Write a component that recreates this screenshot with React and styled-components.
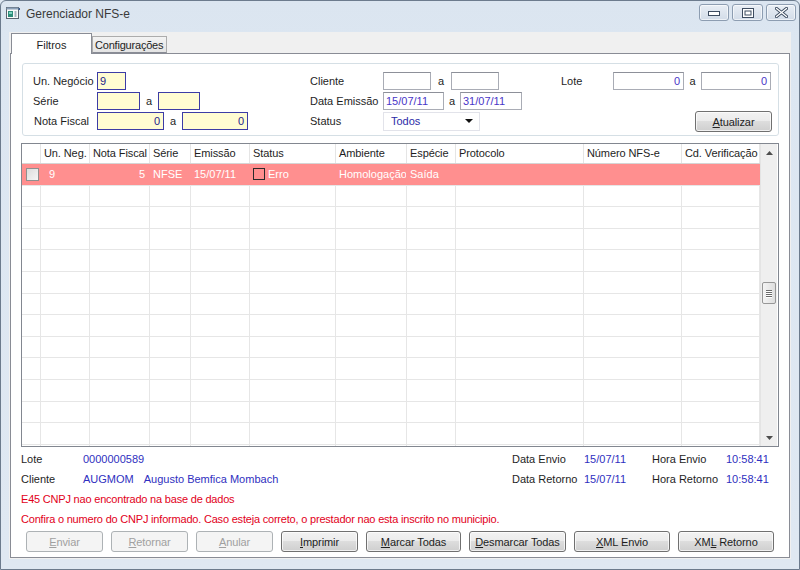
import React from 'react';
import styled, { createGlobalStyle } from 'styled-components';

const GlobalStyle = createGlobalStyle`
  html, body {
    margin: 0;
    padding: 0;
    background: #dfe8f2;
  }
  body {
    font-family: "Liberation Sans", Arial, sans-serif;
    font-size: 11px;
    color: #1e1e1e;
  }
`;

const Window = styled.div`
  width: 800px;
  height: 570px;
  box-sizing: border-box;
  border: 1px solid #6c7b8d;
  border-radius: 6px 6px 0 0;
  background: linear-gradient(#dbe5f0, #dce6f1 40px, #dfe8f2);
  display: flex;
  flex-direction: column;
  overflow: hidden;
`;

const TitleBar = styled.div`
  height: 31px;
  flex: none;
  display: flex;
  align-items: flex-start;
  padding: 0 3px 0 5px;
  box-sizing: border-box;
`;

const TitleIcon = styled.svg`
  margin-top: 6px;
  flex: none;
`;

const Title = styled.div`
  margin: 5px 0 0 6px;
  font-size: 12px;
  color: #3a3a3a;
  flex: 1;
  line-height: 16px;
`;

const CaptionButtons = styled.div`
  display: flex;
  gap: 3px;
  margin-top: 3px;
`;

const CaptionButton = styled.div`
  width: ${p => p.$w}px;
  height: 17px;
  box-sizing: border-box;
  border: 1px solid #8d9db1;
  border-radius: 3px;
  background: linear-gradient(#e9eef5, #d2dce8);
  box-shadow: inset 0 0 0 1px rgba(255, 255, 255, 0.6);
  display: flex;
  align-items: center;
  justify-content: center;
`;

const Client = styled.div`
  flex: 1;
  margin: 0 8px 10px 8px;
  background: #f0f0f0;
  padding: 1px;
  display: flex;
  flex-direction: column;
`;

const TabStrip = styled.div`
  height: 20px;
  display: flex;
  align-items: flex-end;
  padding-left: 1px;
  position: relative;
  z-index: 1;
`;

const Tab = styled.div`
  box-sizing: border-box;
  height: ${p => (p.$active ? 21 : 17)}px;
  width: ${p => p.$w}px;
  margin-bottom: ${p => (p.$active ? -1 : 0)}px;
  border: 1px solid ${p => (p.$active ? '#898c95' : '#acacac')};
  border-bottom: ${p => (p.$active ? 'none' : '1px solid #898c95')};
  background: ${p => (p.$active ? '#ffffff' : 'linear-gradient(#f3f3f3, #e4e4e4)')};
  display: flex;
  align-items: center;
  justify-content: ${p => (p.$active ? 'center' : 'flex-start')};
  padding: ${p => (p.$active ? '2px 0 0 0' : '0 0 0 2px')};
  font-size: 11px;
  letter-spacing: ${p => (p.$active ? 0 : -0.2)}px;
  white-space: nowrap;
  color: #1e1e1e;
`;

const Panel = styled.div`
  flex: 1;
  border: 1px solid #898c95;
  background: #ffffff;
  padding: 8px 10px 0 10px;
  display: flex;
  flex-direction: column;
`;

const GroupBox = styled.div`
  margin: 1px 0 0 1px;
  border: 1px solid #d5dfe5;
  border-radius: 3px;
  padding: 8px 0 5px 10px;
  display: flex;
  height: 58px;
`;

const Section = styled.div`
  width: ${p => (p.$w ? `${p.$w}px` : 'auto')};
  flex: ${p => (p.$w ? 'none' : 1)};
  display: flex;
  flex-direction: column;
  gap: 2px;
`;

const FieldRow = styled.div`
  height: 18px;
  display: flex;
  align-items: center;
`;

const Label = styled.div`
  width: ${p => p.$w}px;
  flex: none;
  padding-left: ${p => p.$pad || 0}px;
  box-sizing: border-box;
  color: #1e1e1e;
`;

const Input = styled.div`
  width: ${p => p.$w}px;
  height: 18px;
  flex: none;
  box-sizing: border-box;
  border: 1px solid ${p => (p.$req ? '#3c3ca6' : '#a9acb5')};
  border-top-color: ${p => (p.$req ? '#3c3ca6' : '#8d9099')};
  background: ${p => (p.$req ? '#fffcd2' : '#ffffff')};
  color: ${p => (p.$req ? '#23238c' : '#4a36c8')};
  text-align: ${p => (p.$right ? 'right' : 'left')};
  padding: 0 3px 0 2px;
  line-height: 16px;
  font-size: 11px;
`;

const Sep = styled.div`
  width: ${p => p.$w}px;
  flex: none;
  text-align: center;
`;

const Select = styled.div`
  width: 97px;
  height: 19px;
  box-sizing: border-box;
  border: 1px solid #e2e3ea;
  background: #fff;
  color: #2b2ba8;
  display: flex;
  align-items: center;
  padding: 0 6px 0 7px;
  justify-content: space-between;
`;

const Button = styled.div`
  width: ${p => p.$w}px;
  height: 21px;
  flex: none;
  box-sizing: border-box;
  border: 1px solid ${p => (p.$disabled ? '#adb2b5' : '#707070')};
  border-radius: 3px;
  background: ${p =>
    p.$disabled ? '#f4f4f4' : 'linear-gradient(#f2f2f2 0%, #ebebeb 49%, #dddddd 50%, #cfcfcf 100%)'};
  box-shadow: ${p => (p.$disabled ? 'none' : 'inset 0 0 0 1px rgba(255,255,255,0.7)')};
  color: ${p => (p.$disabled ? '#a0a0a0' : '#1e1e1e')};
  display: flex;
  align-items: center;
  justify-content: center;
  font-size: 11px;
  letter-spacing: -0.1px;
`;

const Grid = styled.div`
  margin-top: 7px;
  height: 304px;
  box-sizing: border-box;
  border: 1px solid #828790;
  display: flex;
  overflow: hidden;
`;

const Table = styled.div`
  width: 738px;
  flex: none;
  overflow: hidden;
`;

const cols = [19, 49, 60, 41, 59, 86, 71, 49, 128, 98, 78];
const colTemplate = cols.map(c => `${c}px`).join(' ');

const HeaderRow = styled.div`
  display: grid;
  grid-template-columns: ${colTemplate};
  height: 20px;
  box-sizing: border-box;
  border-bottom: 1px solid #d5d5d5;
  background: #ffffff;
`;

const HeaderCell = styled.div`
  padding-left: 3px;
  border-right: 1px solid #e5e5e5;
  line-height: 19px;
  white-space: nowrap;
  overflow: hidden;
  color: #1e1e1e;
  font-size: 11px;
  letter-spacing: -0.1px;
`;

const Row = styled.div`
  display: grid;
  grid-template-columns: ${colTemplate};
  height: 21.6px;
  box-sizing: border-box;
  border-bottom: 1px solid #e6e6e6;
  background: ${p => (p.$error ? '#ff8f8f' : '#ffffff')};
  color: #ffffff;
`;

const Cell = styled.div`
  border-right: 1px solid ${p => (p.$error ? 'transparent' : '#e6e6e6')};
  padding: 0 ${p => (p.$right ? 4 : 0)}px 0 ${p => (p.$pad != null ? p.$pad : 3)}px;
  display: flex;
  align-items: center;
  justify-content: ${p => (p.$right ? 'flex-end' : 'flex-start')};
  white-space: nowrap;
  overflow: hidden;
  font-size: 11px;
`;

const RowCheck = styled.div`
  width: 13px;
  height: 13px;
  box-sizing: border-box;
  border: 1px solid #8f8f8f;
  background: linear-gradient(135deg, #dcdcdc, #f6f6f6);
  margin-left: 1px;
`;

const StatusBox = styled.div`
  width: 12px;
  height: 12px;
  box-sizing: border-box;
  border: 1px solid #2a2a2a;
  margin-right: 3px;
`;

const ScrollBar = styled.div`
  width: 17px;
  flex: none;
  background: #efefef;
  border-left: 1px solid #e4e4e4;
  box-sizing: border-box;
  display: flex;
  flex-direction: column;
  align-items: center;
`;

const ArrowBox = styled.div`
  height: 17px;
  width: 100%;
  display: flex;
  align-items: center;
  justify-content: center;
`;

const Thumb = styled.div`
  margin-top: 121px;
  width: 14px;
  height: 22px;
  box-sizing: border-box;
  border: 1px solid #979797;
  border-radius: 2px;
  background: linear-gradient(90deg, #f4f4f4, #dedede);
  display: flex;
  flex-direction: column;
  align-items: center;
  justify-content: center;
  gap: 1px;
`;

const Grip = styled.div`
  width: 6px;
  height: 1px;
  background: #6a6a6a;
  box-shadow: 0 1px 0 #ffffff;
`;

const Spacer = styled.div`
  flex: 1;
`;

const InfoGrid = styled.div`
  display: grid;
  grid-template-columns: 62px 429px 72px 68px 74px auto;
  grid-auto-rows: 20px;
  align-items: center;
  margin-top: 2px;
`;

const InfoLabel = styled.div`
  color: #1e1e1e;
  white-space: nowrap;
`;

const InfoValue = styled.div`
  color: #2f2fc0;
  white-space: nowrap;
  span + span {
    margin-left: 10px;
  }
`;

const ErrorLine = styled.div`
  height: 20px;
  line-height: 20px;
  color: #e2001a;
  white-space: nowrap;
  letter-spacing: -0.2px;
`;

const ButtonBar = styled.div`
  display: flex;
  gap: 8px;
  padding-left: 5px;
  margin-top: 2px;
`;

const columns = [
  '',
  'Un. Neg.',
  'Nota Fiscal',
  'Série',
  'Emissão',
  'Status',
  'Ambiente',
  'Espécie',
  'Protocolo',
  'Número NFS-e',
  'Cd. Verificação',
];

function Mn({ text, at }) {
  return (
    <span>
      {text.slice(0, at)}
      <u>{text[at]}</u>
      {text.slice(at + 1)}
    </span>
  );
}

function UpArrow() {
  return (
    <svg width="7" height="4" viewBox="0 0 7 4">
      <path d="M0 4 L3.5 0 L7 4 Z" fill="#4d4d4d" />
    </svg>
  );
}

function DownArrow() {
  return (
    <svg width="7" height="4" viewBox="0 0 7 4">
      <path d="M0 0 L3.5 4 L7 0 Z" fill="#4d4d4d" />
    </svg>
  );
}

export default function App() {
  const emptyRows = Array.from({ length: 13 });

  return (
    <>
      <GlobalStyle />
      <Window>
        <TitleBar>
          <TitleIcon width="14" height="13" viewBox="0 0 14 13">
            <rect x="0.5" y="0.5" width="12" height="11" fill="#fafafa" stroke="#5b6470" />
            <rect x="0.5" y="0.5" width="12" height="2" fill="#8aa0b8" />
            <rect x="2" y="4" width="5" height="6" fill="#2f8c7a" />
            <rect x="3" y="5" width="3" height="2" fill="#7fd3c0" />
            <rect x="8.5" y="4" width="2" height="6" fill="#a7b3bf" />
            <rect x="12.5" y="1" width="1.5" height="2" fill="#3a5a8a" />
          </TitleIcon>
          <Title>Gerenciador NFS-e</Title>
          <CaptionButtons>
            <CaptionButton $w={30}>
              <svg width="12" height="6" viewBox="0 0 12 6">
                <rect x="0.5" y="1.5" width="11" height="4" fill="#fff" stroke="#3d4c60" />
              </svg>
            </CaptionButton>
            <CaptionButton $w={31}>
              <svg width="12" height="10" viewBox="0 0 12 10">
                <rect x="0.5" y="0.5" width="11" height="9" fill="#fff" stroke="#3d4c60" />
                <rect x="3" y="3" width="6" height="4" fill="none" stroke="#3d4c60" />
              </svg>
            </CaptionButton>
            <CaptionButton $w={30}>
              <svg width="13" height="11" viewBox="0 0 13 11">
                <path
                  d="M1.5 1.5 L11.5 9.5 M11.5 1.5 L1.5 9.5"
                  stroke="#3d4c60"
                  strokeWidth="3.2"
                  strokeLinecap="round"
                />
                <path
                  d="M1.5 1.5 L11.5 9.5 M11.5 1.5 L1.5 9.5"
                  stroke="#ffffff"
                  strokeWidth="1.4"
                  strokeLinecap="round"
                />
              </svg>
            </CaptionButton>
          </CaptionButtons>
        </TitleBar>

        <Client>
          <TabStrip>
            <Tab $active $w={81}>Filtros</Tab>
            <Tab $w={75}>Configurações</Tab>
          </TabStrip>
          <Panel>
            <GroupBox>
              <Section $w={277}>
                <FieldRow>
                  <Label $w={64}>Un. Negócio</Label>
                  <Input $req $w={29}>9</Input>
                </FieldRow>
                <FieldRow>
                  <Label $w={64}>Série</Label>
                  <Input $req $w={43} />
                  <Sep $w={18}>a</Sep>
                  <Input $req $w={42} />
                </FieldRow>
                <FieldRow>
                  <Label $w={64} $pad={1}>Nota Fiscal</Label>
                  <Input $req $right $w={67}>0</Input>
                  <Sep $w={18}>a</Sep>
                  <Input $req $right $w={66}>0</Input>
                </FieldRow>
              </Section>
              <Section $w={251}>
                <FieldRow>
                  <Label $w={73}>Cliente</Label>
                  <Input $w={48} />
                  <Sep $w={20}>a</Sep>
                  <Input $w={48} />
                </FieldRow>
                <FieldRow>
                  <Label $w={73}>Data Emissão</Label>
                  <Input $w={61}>15/07/11</Input>
                  <Sep $w={16}>a</Sep>
                  <Input $w={62}>31/07/11</Input>
                </FieldRow>
                <FieldRow>
                  <Label $w={73}>Status</Label>
                  <Select>
                    <span>Todos</span>
                    <svg width="8" height="4" viewBox="0 0 8 4">
                      <path d="M0 0 L4 4 L8 0 Z" fill="#111" />
                    </svg>
                  </Select>
                </FieldRow>
              </Section>
              <Section>
                <FieldRow>
                  <Label $w={52}>Lote</Label>
                  <Input $right $w={71}>0</Input>
                  <Sep $w={17}>a</Sep>
                  <Input $right $w={70}>0</Input>
                </FieldRow>
                <FieldRow />
                <FieldRow>
                  <Spacer />
                  <Button $w={77} style={{ marginRight: 6, marginTop: 1 }}>
                    <Mn text="Atualizar" at={0} />
                  </Button>
                </FieldRow>
              </Section>
            </GroupBox>

            <Grid>
              <Table>
                <HeaderRow>
                  {columns.map((c, i) => (
                    <HeaderCell key={i}>{c}</HeaderCell>
                  ))}
                </HeaderRow>
                <Row $error>
                  <Cell $error $pad={3}>
                    <RowCheck />
                  </Cell>
                  <Cell $error $pad={8}>9</Cell>
                  <Cell $error $right>5</Cell>
                  <Cell $error>NFSE</Cell>
                  <Cell $error>15/07/11</Cell>
                  <Cell $error>
                    <StatusBox />
                    Erro
                  </Cell>
                  <Cell $error>Homologação</Cell>
                  <Cell $error>Saída</Cell>
                  <Cell $error />
                  <Cell $error />
                  <Cell $error />
                </Row>
                {emptyRows.map((_, r) => (
                  <Row key={r}>
                    {cols.map((_, i) => (
                      <Cell key={i} />
                    ))}
                  </Row>
                ))}
              </Table>
              <ScrollBar>
                <ArrowBox>
                  <UpArrow />
                </ArrowBox>
                <Thumb>
                  <Grip />
                  <Grip />
                  <Grip />
                  <Grip />
                </Thumb>
                <Spacer />
                <ArrowBox>
                  <DownArrow />
                </ArrowBox>
              </ScrollBar>
            </Grid>

            <InfoGrid>
              <InfoLabel>Lote</InfoLabel>
              <InfoValue>0000000589</InfoValue>
              <InfoLabel>Data Envio</InfoLabel>
              <InfoValue>15/07/11</InfoValue>
              <InfoLabel>Hora Envio</InfoLabel>
              <InfoValue>10:58:41</InfoValue>
              <InfoLabel>Cliente</InfoLabel>
              <InfoValue>
                <span>AUGMOM</span>
                <span>Augusto Bemfica Mombach</span>
              </InfoValue>
              <InfoLabel>Data Retorno</InfoLabel>
              <InfoValue>15/07/11</InfoValue>
              <InfoLabel>Hora Retorno</InfoLabel>
              <InfoValue>10:58:41</InfoValue>
            </InfoGrid>
            <ErrorLine>E45 CNPJ nao encontrado na base de dados</ErrorLine>
            <ErrorLine>
              Confira o numero do CNPJ informado. Caso esteja correto, o prestador nao esta inscrito no municipio.
            </ErrorLine>

            <ButtonBar>
              <Button $disabled $w={77}><Mn text="Enviar" at={0} /></Button>
              <Button $disabled $w={77}><Mn text="Retornar" at={0} /></Button>
              <Button $disabled $w={77}><Mn text="Anular" at={0} /></Button>
              <Button $w={77}><Mn text="Imprimir" at={0} /></Button>
              <Button $w={95}><Mn text="Marcar Todas" at={0} /></Button>
              <Button $w={97}><Mn text="Desmarcar Todas" at={0} /></Button>
              <Button $w={96}><Mn text="XML Envio" at={0} /></Button>
              <Button $w={96}><Mn text="XML Retorno" at={2} /></Button>
            </ButtonBar>
          </Panel>
        </Client>
      </Window>
    </>
  );
}
